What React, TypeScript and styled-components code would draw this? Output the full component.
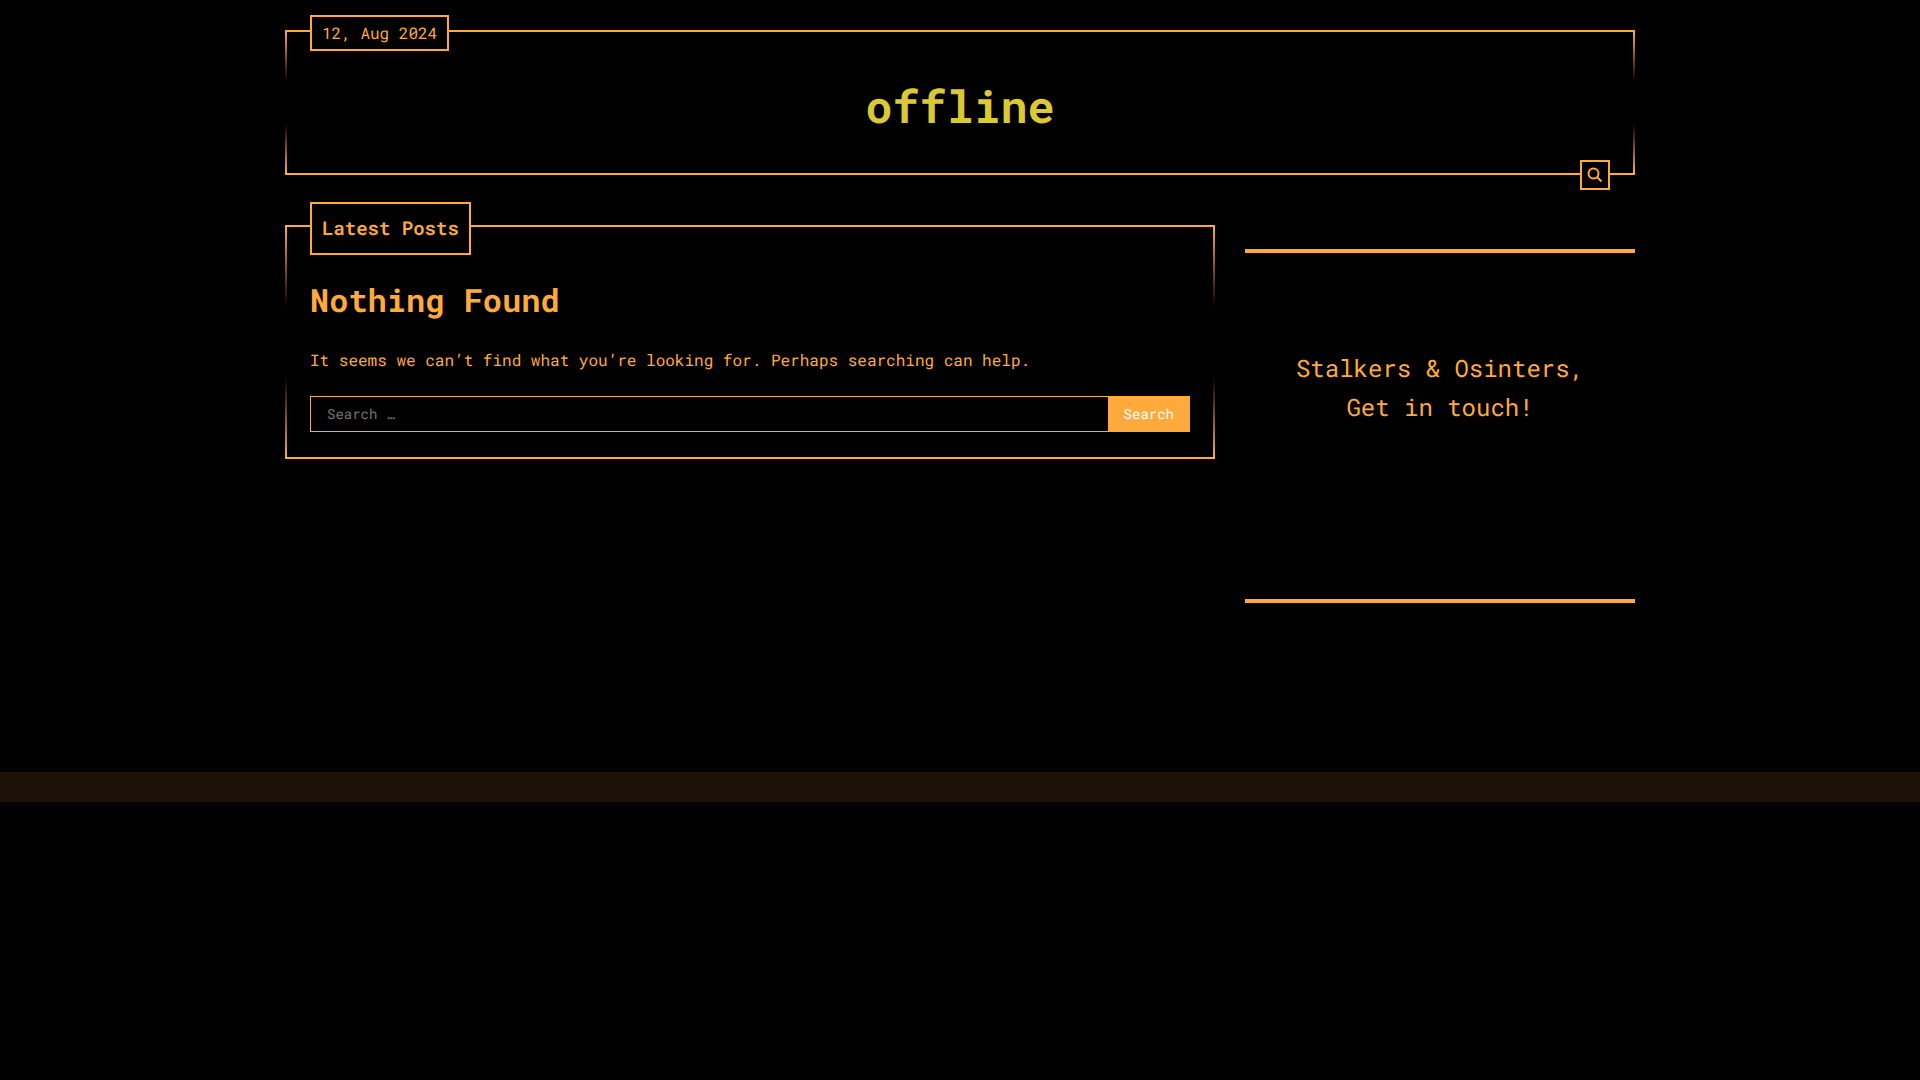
import React from "react";
import styled, { createGlobalStyle, css } from "styled-components";

const accent = "#ffaa3b";
const ink = "#010001";

const GlobalStyle = createGlobalStyle`
  *, *::before, *::after { box-sizing: border-box; }
  body {
    margin: 0;
    background: ${ink};
    color: ${accent};
    font-family: "Roboto Mono", "DejaVu Sans Mono", "Liberation Mono", monospace;
    font-size: 16px;
    line-height: 26px;
    text-rendering: geometricPrecision;
  }
`;

const Container = styled.div`
  width: 100%;
  max-width: 1380px;
  margin: 0 auto;
  padding: 30px 15px 0;
`;

const frame = css`
  position: relative;
  border: solid ${accent};
  border-width: 2px 0;
  background:
    linear-gradient(${accent}, transparent 35%, transparent 65%, ${accent}) left / 2px 100% no-repeat,
    linear-gradient(${accent}, transparent 35%, transparent 65%, ${accent}) right / 2px 100% no-repeat;
`;

const Header = styled.header`
  ${frame}
  display: flex;
  justify-content: center;
  padding: 46px 24px 38px;
`;

const badge = css`
  position: absolute;
  border: 2px solid ${accent};
  background: ${ink};
  color: ${accent};
`;

const DateBadge = styled.time`
  ${badge}
  top: -17px;
  left: 25px;
  padding: 4px 10px 2px;
`;

const SearchToggle = styled.button`
  ${badge}
  right: 25px;
  bottom: -17px;
  display: flex;
  align-items: center;
  justify-content: center;
  width: 30px;
  height: 30px;
  padding: 0;
  cursor: pointer;
`;

const SiteTitle = styled.h1`
  margin: 0;
  font-size: 45px;
  line-height: 57px;
  font-weight: 700;

  a {
    color: #dbc933;
    text-decoration: none;
  }
`;

const Columns = styled.div`
  display: grid;
  grid-template-columns: minmax(0, 1fr) 390px;
  gap: 30px;
  align-items: start;
  padding-top: 50px;

  @media (max-width: 900px) {
    grid-template-columns: minmax(0, 1fr);
  }
`;

const Posts = styled.main`
  ${frame}
  padding: 49px 25px 25px;
`;

const SectionLabel = styled.h2`
  ${badge}
  top: -25px;
  left: 25px;
  margin: 0;
  padding: 12px 10px;
  font-size: 19px;
  line-height: 25px;
  font-weight: 600;
`;

const PageTitle = styled.h2`
  margin: 0 0 24px;
  font-size: 32px;
  line-height: 48px;
  font-weight: 700;
`;

const Message = styled.p`
  margin: 0 0 22px;
`;

const SearchForm = styled.form`
  display: flex;
  height: 36px;
`;

const SearchInput = styled.input`
  flex: 1;
  min-width: 0;
  padding: 0 16px;
  border: 1px solid ${accent};
  border-right: 0;
  border-radius: 0;
  background: transparent;
  color: ${accent};
  font: inherit;
  font-size: 14px;
  text-rendering: inherit;

  &::placeholder {
    color: #757575;
    opacity: 1;
  }
`;

const SearchSubmit = styled.button`
  padding: 0 16px;
  border: 0;
  background: ${accent};
  color: #fff;
  font: inherit;
  font-size: 14px;
  text-rendering: inherit;
  cursor: pointer;
`;

const Sidebar = styled.aside`
  padding-top: 24px;
`;

const Notice = styled.section`
  border: solid ${accent};
  border-width: 4px 0;
  padding: 96px 15px 172px;
  text-align: center;
  font-size: 24px;
  line-height: 39px;

  p { margin: 0; }
`;

const Footer = styled.footer`
  height: 30px;
  margin-top: 169px;
  background: #1c1208;
`;

export default function App() {
  return (
    <>
      <GlobalStyle />
      <Container>
        <Header>
          <DateBadge dateTime="2024-08-12">12, Aug 2024</DateBadge>
          <SiteTitle>
            <a href="#">offline</a>
          </SiteTitle>
          <SearchToggle type="button" aria-label="Open search">
            <svg width="16" height="16" viewBox="0 0 16 16" fill="none" stroke="currentColor" strokeWidth="2">
              <circle cx="6.5" cy="6.5" r="5" />
              <path d="M10 10l4.5 4.5" />
            </svg>
          </SearchToggle>
        </Header>
        <Columns>
          <Posts>
            <SectionLabel>Latest Posts</SectionLabel>
            <PageTitle>Nothing Found</PageTitle>
            <Message>It seems we can’t find what you’re looking for. Perhaps searching can help.</Message>
            <SearchForm role="search" onSubmit={(e) => e.preventDefault()}>
              <SearchInput type="search" aria-label="Search for" placeholder="Search …" />
              <SearchSubmit type="submit">Search</SearchSubmit>
            </SearchForm>
          </Posts>
          <Sidebar>
            <Notice>
              <p>
                Stalkers &amp; Osinters,
                <br />
                Get in touch!
              </p>
            </Notice>
          </Sidebar>
        </Columns>
      </Container>
      <Footer />
    </>
  );
}
